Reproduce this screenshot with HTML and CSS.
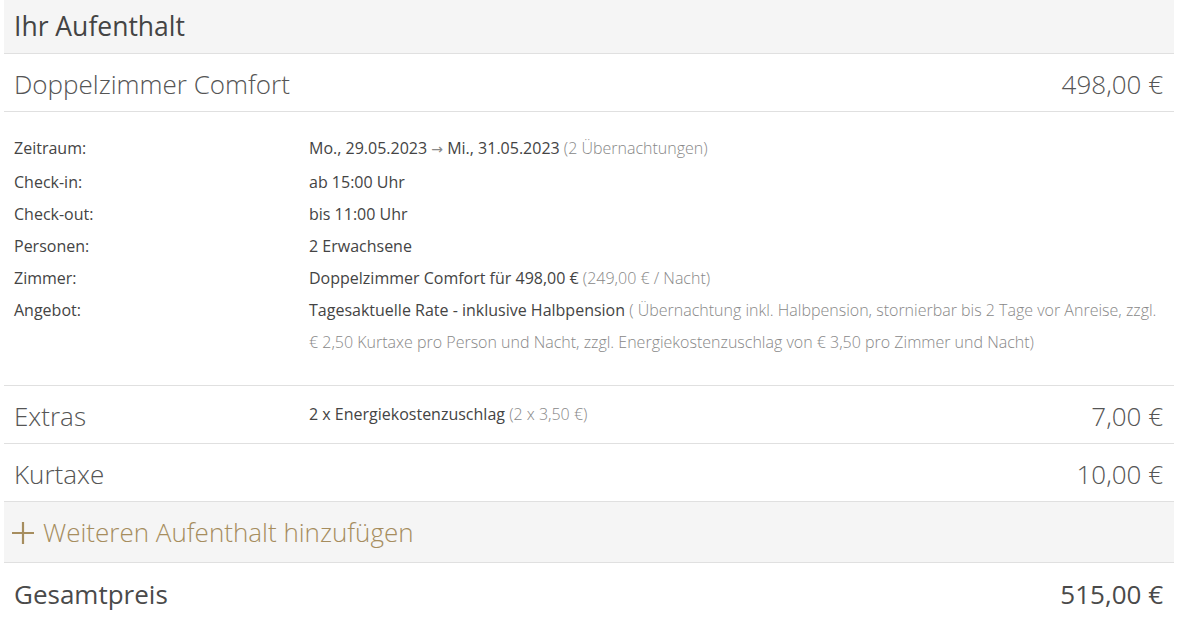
FILE: index.html
```html
<!DOCTYPE html>
<html lang="de">
<head>
    <meta charset="UTF-8">
    <meta name="viewport" content="width=device-width, initial-scale=1.0">
    <title>Ihr Aufenthalt</title>
    <link rel="stylesheet" href="styles.css">
</head>
<body>
    <div class="stay">
        <div class="stay-head">
            <h2>Ihr Aufenthalt</h2>
        </div>

        <div class="line-row">
            <div class="line-title">Doppelzimmer Comfort</div>
            <div class="line-price">498,00 €</div>
        </div>

        <div class="details">
            <div class="detail">
                <span class="label">Zeitraum:</span>
                <span class="value">Mo., 29.05.2023 <span class="arrow">→</span> Mi., 31.05.2023 <span class="muted">(2 Übernachtungen)</span></span>
            </div>
            <div class="detail">
                <span class="label">Check-in:</span>
                <span class="value">ab 15:00 Uhr</span>
            </div>
            <div class="detail">
                <span class="label">Check-out:</span>
                <span class="value">bis 11:00 Uhr</span>
            </div>
            <div class="detail">
                <span class="label">Personen:</span>
                <span class="value">2 Erwachsene</span>
            </div>
            <div class="detail">
                <span class="label">Zimmer:</span>
                <span class="value">Doppelzimmer Comfort für 498,00 € <span class="muted">(249,00 € / Nacht)</span></span>
            </div>
            <div class="detail">
                <span class="label">Angebot:</span>
                <span class="value">Tagesaktuelle Rate - inklusive Halbpension <span class="muted">( Übernachtung inkl. Halbpension, stornierbar bis 2 Tage vor Anreise, zzgl. € 2,50 Kurtaxe pro Person und Nacht, zzgl. Energiekostenzuschlag von € 3,50 pro Zimmer und Nacht)</span></span>
            </div>
        </div>

        <div class="line-row">
            <div class="line-title">Extras</div>
            <div class="line-note">2 x Energiekostenzuschlag <span class="muted">(2 x 3,50 €)</span></div>
            <div class="line-price">7,00 €</div>
        </div>

        <div class="line-row">
            <div class="line-title">Kurtaxe</div>
            <div class="line-price">10,00 €</div>
        </div>

        <div class="add-row">
            <svg class="plus" width="24" height="24" viewBox="0 0 24 24">
                <path d="M12 1v22M1 12h22" stroke="currentColor" stroke-width="2.2" fill="none"/>
            </svg>
            <span>Weiteren Aufenthalt hinzufügen</span>
        </div>

        <div class="total-row">
            <div class="total-title">Gesamtpreis</div>
            <div class="total-price">515,00 €</div>
        </div>
    </div>
</body>
</html>
```

FILE: styles.css
```css
body {
    margin: 0;
    padding: 0 7px 0 4px;
    font-family: "Open Sans", Arial, sans-serif;
    color: #555;
    background-color: #fff;
}
.stay {
    width: 1170px;
}
.stay-head {
    background-color: #f5f5f5;
    border-bottom: 1px solid #e0e0e0;
    height: 54px;
    padding: 0 10px 2px;
    box-sizing: border-box;
    display: flex;
    align-items: center;
}
.stay-head h2 {
    margin: 0;
    font-size: 26.5px;
    font-weight: 400;
    color: #444;
}
.line-row {
    display: grid;
    grid-template-columns: 295px 1fr auto;
    align-items: center;
    height: 57px;
    padding: 0 11px 0 10px;
    border-bottom: 1px solid #e0e0e0;
}
.line-title {
    font-size: 26px;
    font-weight: 300;
    color: #555;
    padding-top: 2px;
}
.line-price {
    grid-column: 3;
    font-size: 26px;
    font-weight: 300;
    color: #555;
    padding-top: 2px;
}
.line-note {
    font-size: 16px;
    color: #444;
    align-self: start;
    padding-top: 17px;
}
.details {
    padding: 20px 10px 27px;
    border-bottom: 1px solid #e0e0e0;
    font-size: 16px;
}
.detail {
    display: grid;
    grid-template-columns: 295px 1fr;
    line-height: 32px;
}
.detail:first-child {
    margin-bottom: 2px;
}
.label {
    color: #444;
}
.value {
    color: #444;
    padding-right: 6px;
}
.muted {
    color: #888;
    font-weight: 300;
}
.arrow {
    font-family: "DejaVu Sans", sans-serif;
    font-size: 14px;
    line-height: 1;
    color: #888;
}
.add-row {
    display: flex;
    align-items: center;
    gap: 8px;
    height: 60px;
    padding: 0 8px 0 7px;
    background-color: #f5f5f5;
    border-bottom: 1px solid #e0e0e0;
    color: #a68d5e;
    font-size: 26px;
    font-weight: 300;
}
.plus {
    flex: none;
    margin-top: 2px;
}
.total-row {
    display: flex;
    justify-content: space-between;
    align-items: center;
    height: 62px;
    padding: 0 11px 0 10px;
    box-sizing: border-box;
    font-size: 26px;
    color: #4a4a4a;
}
```
